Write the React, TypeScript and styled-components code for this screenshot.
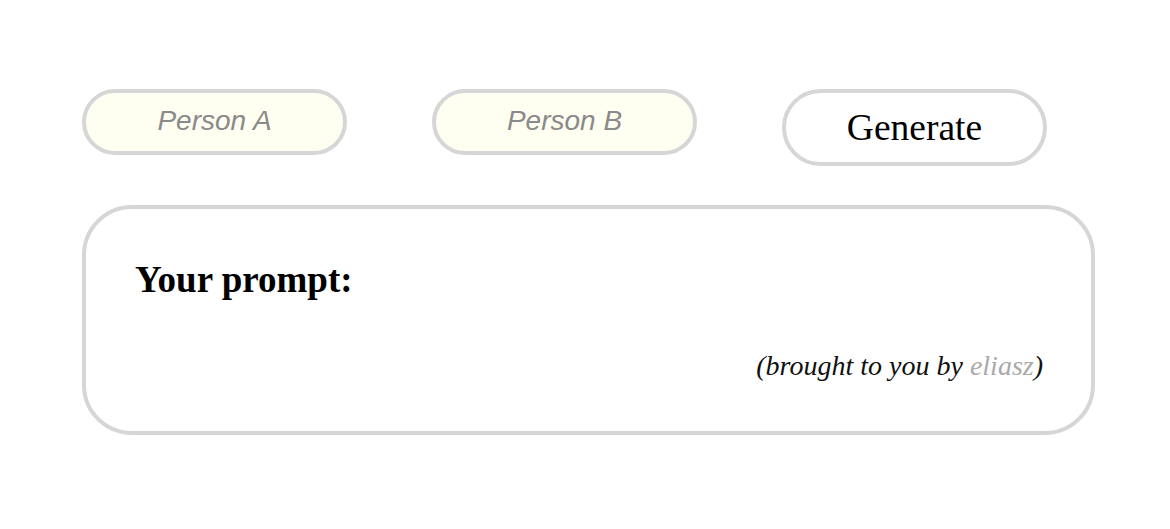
import styled, { createGlobalStyle } from "styled-components";

const GlobalStyle = createGlobalStyle`
  html, body {
    margin: 0;
    padding: 0;
    background: #ffffff;
  }
`;

const Page = styled.div`
  padding: 89px 0 0 82px;
  font-family: "Liberation Serif", "Times New Roman", serif;
`;

const Controls = styled.div`
  display: flex;
  align-items: flex-start;
  gap: 85px;
`;

const NameInput = styled.input`
  box-sizing: border-box;
  width: 265px;
  height: 66px;
  border: 4px solid #d6d6d6;
  border-radius: 33px;
  background: #fefef1;
  text-align: center;
  font-family: "Liberation Sans", Arial, sans-serif;
  font-size: 28px;
  font-style: italic;
  color: #555;
  outline: none;
  padding: 0 0 2px;

  &::placeholder {
    color: #8a8a8a;
  }
`;

const GenerateButton = styled.button`
  box-sizing: border-box;
  width: 265px;
  height: 77px;
  border: 4px solid #d6d6d6;
  border-radius: 39px;
  background: #ffffff;
  font-family: "Liberation Serif", "Times New Roman", serif;
  font-size: 37.5px;
  color: #000;
  padding: 0;
  cursor: pointer;
`;

const PromptCard = styled.div`
  box-sizing: border-box;
  width: 1013px;
  height: 230px;
  margin-top: 39px;
  border: 4px solid #d6d6d6;
  border-radius: 50px;
  padding: 49px 48px 0 49px;
  display: flex;
  flex-direction: column;
`;

const PromptTitle = styled.h2`
  margin: 0;
  font-size: 37px;
  font-weight: bold;
  color: #000;
`;

const Credit = styled.p`
  margin: 49px 0 0;
  align-self: flex-end;
  font-size: 28px;
  font-style: italic;
  color: #111;
`;

const Author = styled.a`
  color: #a9a9a9;
  text-decoration: none;
`;

export default function App() {
  return (
    <>
      <GlobalStyle />
      <Page>
        <Controls>
          <NameInput placeholder="Person A" />
          <NameInput placeholder="Person B" />
          <GenerateButton>Generate</GenerateButton>
        </Controls>
        <PromptCard>
          <PromptTitle>Your prompt:</PromptTitle>
          <Credit>
            (brought to you by <Author href="#">eliasz</Author>)
          </Credit>
        </PromptCard>
      </Page>
    </>
  );
}
